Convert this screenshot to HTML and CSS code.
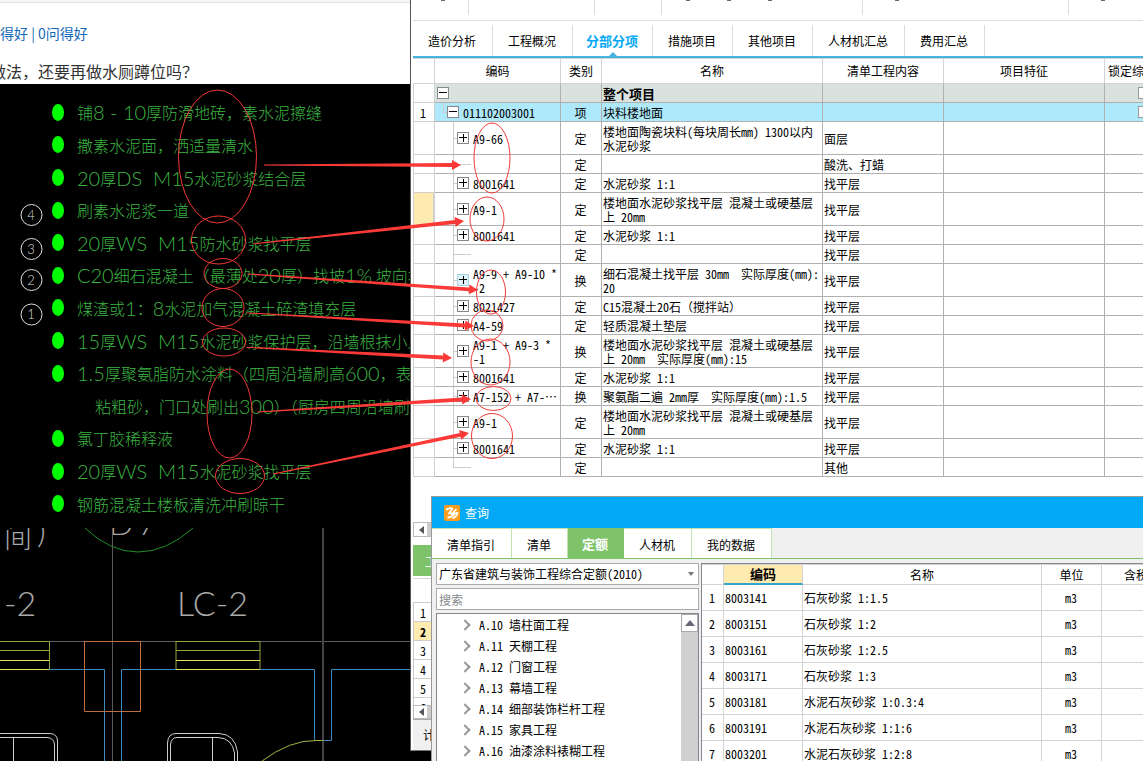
FILE: index.html
```html
<!DOCTYPE html>
<html lang="zh-CN">
<head>
<meta charset="utf-8">
<title>分部分项</title>
<link rel="stylesheet" href="styles.css">
</head>
<body>
<div class="desk">
  <section class="post">
    <header class="post-head">
      <p class="votes"><a href="#">答得好</a> | <a href="#">0问得好</a></p>
      <h1 class="question">做法，还要再做水厕蹲位吗？</h1>
    </header>
    <div class="cad">
      <ul class="notes">
        <li>铺<b>8 - 10</b>厚防滑地砖，素水泥擦缝</li>
        <li>撒素水泥面，洒适量清水</li>
        <li><b>20</b>厚<b>DS  M15</b>水泥砂浆结合层</li>
        <li>刷素水泥浆一道</li>
        <li><b>20</b>厚<b>WS  M15</b>防水砂浆找平层</li>
        <li><b>C20</b>细石混凝土（最薄处<b>20</b>厚）找坡<b>1%</b> 坡向地漏</li>
        <li>煤渣或<b>1</b>：<b>8</b>水泥加气混凝土碎渣填充层</li>
        <li><b>15</b>厚<b>WS  M15</b>水泥砂浆保护层，沿墙根抹小八字</li>
        <li><b>1.5</b>厚聚氨脂防水涂料（四周沿墙刷高<b>600</b>，表面</li>
        <li class="cont">粘粗砂，门口处刷出<b>300</b>）（厨房四周沿墙刷</li>
        <li>氯丁胶稀释液</li>
        <li><b>20</b>厚<b>WS  M15</b>水泥砂浆找平层</li>
        <li>钢筋混凝土楼板清洗冲刷晾干</li>
      </ul>
      <svg class="plan" width="411" height="233" viewBox="0 528 411 233" fill="none">
        <g class="cad-text">
          <text x="4" y="548" font-size="28">间</text>
          <text x="37" y="543" font-size="34">)</text>
          <text x="109" y="535" font-size="32">D</text>
          <text x="138" y="535" font-size="32">7</text>
          <text x="-39" y="616" font-size="34">LC</text>
          <text x="4" y="616" font-size="34">-2</text>
          <text x="177" y="616" font-size="34">LC-2</text>
        </g>
        <path d="M85 528Q110 552 138 552T193 528" stroke="#1f8f2c"/>
        <path d="M112.500 528V761M0 641.500H411" stroke="#5c5c5c"/>
        <path d="M323 528V761" stroke="#444" stroke-width="2"/>
        <path d="M0 641.500H49.500V669M0 650.500H49M176 641.500H260V669M176 669V641M176 650.500H260" stroke="#9aa23c"/>
        <path d="M0 660.500H49M0 669.500H49M176 660.500H260M176 669.500H260" stroke="#e4e456"/>
        <path d="M49 669.500H104.500V761M121.500 761V669.500H176M260 669.500H314.500V740.500H331.500V669.500H411" stroke="#3a8cc0"/>
        <path d="M84.500 641.500H140.500V711.500H84.500Z" stroke="#c0703c"/>
        <path d="M262 761Q290 740 316 740.500H323" stroke="#a8b040"/>
        <path d="M0 733.500H50Q57.500 734 57.500 741V761M0 737.500H47Q54.500 738 54.500 745V761M13.500 737V761M167.500 761V743Q168 733.500 176 733.500H219Q235 734 237.500 752V761M170.500 761V745Q171 737.500 177 737.500H218Q232 738 234.500 753V761M212.500 737V761" stroke="#ccc"/>
      </svg>
      <svg class="marks" width="60" height="130" viewBox="0 200 60 130">
        <g fill="none" stroke="#ddd">
          <circle cx="31.500" cy="215" r="10.500"/><circle cx="31.500" cy="249" r="10.500"/><circle cx="31.500" cy="280" r="10.500"/><circle cx="31.500" cy="314.500" r="10.500"/>
        </g>
        <g class="mark-text"><text x="31" y="220">4</text><text x="31" y="254">3</text><text x="31" y="285">2</text><text x="31" y="319">1</text></g>
      </svg>
    </div>
  </section>

  <main class="app">
    <div class="toolbar">
      <div class="group g1"><i class="tip"></i></div>
      <div class="group g2"></div>
      <div class="group g3"></div>
      <div class="group g4"><i class="tip"></i><i class="tip"></i><i class="tip"></i></div>
      <div class="group g5"><i class="tip"></i></div>
      <div class="group g6"><i class="tip"></i></div>
    </div>
    <nav class="tabs">
      <button>造价分析</button><button>工程概况</button><button class="on">分部分项</button><button>措施项目</button><button>其他项目</button><button>人材机汇总</button><button>费用汇总</button>
    </nav>
    <table class="bill">
      <colgroup><col class="w-no"><col class="w-code"><col class="w-type"><col class="w-name"><col class="w-work"><col class="w-feat"><col class="w-lock"></colgroup>
      <thead><tr><th></th><th>编码</th><th>类别</th><th>名称</th><th>清单工程内容</th><th>项目特征</th><th>锁定综合单价</th></tr></thead>
      <tbody>
        <tr class="root"><td></td><td><div class="code"><button class="box minus" aria-label="折叠"></button></div></td><td></td><td>整个项目</td><td></td><td></td><td><input type="checkbox" aria-label="锁定整个项目"></td></tr>
        <tr class="item"><td>1</td><td><div class="code lv1"><button class="box minus" aria-label="折叠"></button><span>011102003001</span></div></td><td>项</td><td>块料楼地面</td><td></td><td></td><td><input type="checkbox" aria-label="锁定块料楼地面"></td></tr>
        <tr class="tall"><td></td><td><div class="code lv2"><button class="box" aria-label="展开"></button><span>A9-66</span></div></td><td>定</td><td>楼地面陶瓷块料(每块周长mm) 1300以内<br>水泥砂浆</td><td>面层</td><td></td><td></td></tr>
        <tr><td></td><td><div class="code lv2 bare"></div></td><td>定</td><td></td><td>酸洗、打蜡</td><td></td><td></td></tr>
        <tr><td></td><td><div class="code lv2"><button class="box" aria-label="展开"></button><span>8001641</span></div></td><td>定</td><td>水泥砂浆 1:1</td><td>找平层</td><td></td><td></td></tr>
        <tr class="tall"><td class="cur"></td><td><div class="code lv2"><button class="box" aria-label="展开"></button><span>A9-1</span></div></td><td>定</td><td>楼地面水泥砂浆找平层 混凝土或硬基层<br>上 20mm</td><td>找平层</td><td></td><td></td></tr>
        <tr><td></td><td><div class="code lv2"><button class="box" aria-label="展开"></button><span>8001641</span></div></td><td>定</td><td>水泥砂浆 1:1</td><td>找平层</td><td></td><td></td></tr>
        <tr><td></td><td><div class="code lv2 bare"></div></td><td>定</td><td></td><td>找平层</td><td></td><td></td></tr>
        <tr class="tall"><td></td><td><div class="code lv2"><button class="box hot" aria-label="展开"></button><span>A9-9 + A9-10 *<br>-2</span></div></td><td>换</td><td>细石混凝土找平层 30mm&nbsp; 实际厚度(mm):<br>20</td><td>找平层</td><td></td><td></td></tr>
        <tr><td></td><td><div class="code lv2"><button class="box" aria-label="展开"></button><span>8021427</span></div></td><td>定</td><td>C15混凝土20石（搅拌站）</td><td>找平层</td><td></td><td></td></tr>
        <tr><td></td><td><div class="code lv2"><button class="box" aria-label="展开"></button><span>A4-59</span></div></td><td>定</td><td>轻质混凝土垫层</td><td>找平层</td><td></td><td></td></tr>
        <tr class="tall"><td></td><td><div class="code lv2"><button class="box" aria-label="展开"></button><span>A9-1 + A9-3 *<br>-1</span></div></td><td>换</td><td>楼地面水泥砂浆找平层 混凝土或硬基层<br>上 20mm&nbsp; 实际厚度(mm):15</td><td>找平层</td><td></td><td></td></tr>
        <tr><td></td><td><div class="code lv2"><button class="box" aria-label="展开"></button><span>8001641</span></div></td><td>定</td><td>水泥砂浆 1:1</td><td>找平层</td><td></td><td></td></tr>
        <tr><td></td><td><div class="code lv2"><button class="box" aria-label="展开"></button><span>A7-152 + A7-⋯</span></div></td><td>换</td><td>聚氨酯二遍 2mm厚&nbsp; 实际厚度(mm):1.5</td><td>找平层</td><td></td><td></td></tr>
        <tr class="tall"><td></td><td><div class="code lv2"><button class="box" aria-label="展开"></button><span>A9-1</span></div></td><td>定</td><td>楼地面水泥砂浆找平层 混凝土或硬基层<br>上 20mm</td><td>找平层</td><td></td><td></td></tr>
        <tr><td></td><td><div class="code lv2"><button class="box" aria-label="展开"></button><span>8001641</span></div></td><td>定</td><td>水泥砂浆 1:1</td><td>找平层</td><td></td><td></td></tr>
        <tr><td></td><td><div class="code lv2 bare end"></div></td><td>定</td><td></td><td>其他</td><td></td><td></td></tr>
      </tbody>
    </table>
    <aside class="under">
      <button class="scroll" aria-label="向左"><svg width="6" height="8"><path d="M6 0V8L1 4Z" fill="#555"/></svg></button>
      <div class="subtab">工料机</div>
      <ol class="nums"><li>1</li><li class="cur">2</li><li>3</li><li>4</li><li>5</li><li class="cut">6</li></ol>
      <button class="scroll low" aria-label="向左"><svg width="6" height="8"><path d="M6 0V8L1 4Z" fill="#555"/></svg></button>
      <footer class="status">计价</footer>
    </aside>
  </main>
</div>

<section class="dialog">
  <header class="title">
    <svg width="16" height="16" viewBox="0 0 16 16"><rect width="16" height="16" rx="2" fill="#fa9d1c"/><path d="M2 5Q5 2.500 8.500 3.500L5 8.500Q8 7.500 7.500 9.500L12.500 4M3.500 12.500Q8 12.500 10.500 8.500L13.500 8Q12.500 12 8.500 13.500" fill="none" stroke="#fff" stroke-width="1.800" stroke-linejoin="round"/></svg>
    <span>查询</span>
  </header>
  <nav class="dtabs"><button>清单指引</button><button>清单</button><button class="on">定额</button><button>人材机</button><button>我的数据</button></nav>
  <div class="dbody">
    <div class="side">
      <div class="combo">
        <select aria-label="定额库"><option>广东省建筑与装饰工程综合定额(2010)</option></select>
        <svg width="6" height="4"><path d="M0 0H6L3 4Z" fill="#777"/></svg>
      </div>
      <input class="search" type="text" placeholder="搜索" aria-label="搜索">
      <div class="tree">
        <ul>
          <li>A.10 墙柱面工程</li><li>A.11 天棚工程</li><li>A.12 门窗工程</li><li>A.13 幕墙工程</li><li>A.14 细部装饰栏杆工程</li><li>A.15 家具工程</li><li>A.16 油漆涂料裱糊工程</li>
        </ul>
        <div class="vbar"><button aria-label="向上"><svg width="10" height="6"><path d="M0 6L5 0L10 6Z" fill="#667"/></svg></button></div>
      </div>
    </div>
    <div class="result">
      <table class="list">
        <colgroup><col class="w-no"><col class="w-id"><col class="w-title"><col class="w-unit"><col class="w-price"></colgroup>
        <thead><tr><th></th><th class="cur">编码</th><th>名称</th><th>单位</th><th>含税价</th></tr></thead>
        <tbody>
          <tr><td>1</td><td>8003141</td><td>石灰砂浆 1:1.5</td><td>m3</td><td></td></tr>
          <tr><td>2</td><td>8003151</td><td>石灰砂浆 1:2</td><td>m3</td><td></td></tr>
          <tr><td>3</td><td>8003161</td><td>石灰砂浆 1:2.5</td><td>m3</td><td></td></tr>
          <tr><td>4</td><td>8003171</td><td>石灰砂浆 1:3</td><td>m3</td><td></td></tr>
          <tr><td>5</td><td>8003181</td><td>水泥石灰砂浆 1:0.3:4</td><td>m3</td><td></td></tr>
          <tr><td>6</td><td>8003191</td><td>水泥石灰砂浆 1:1:6</td><td>m3</td><td></td></tr>
          <tr><td>7</td><td>8003201</td><td>水泥石灰砂浆 1:2:8</td><td>m3</td><td></td></tr>
        </tbody>
      </table>
    </div>
  </div>
</section>

<svg class="links" width="1143" height="761" viewBox="0 0 1143 761">
  <g fill="none" stroke="#f03a38">
    <ellipse cx="217.500" cy="156.500" rx="39" ry="66.500"/>
    <ellipse cx="218.500" cy="240" rx="27" ry="24"/>
    <ellipse cx="223" cy="273.500" rx="19" ry="15"/>
    <ellipse cx="223" cy="307.500" rx="21" ry="19"/>
    <ellipse cx="224" cy="342" rx="21.500" ry="14"/>
    <ellipse cx="229.500" cy="413.500" rx="22.500" ry="44.500"/>
    <ellipse cx="240" cy="476" rx="24.500" ry="17.500"/>
    <ellipse cx="492" cy="158" rx="18" ry="35"/>
    <ellipse cx="487" cy="219" rx="17" ry="22"/>
    <ellipse cx="491" cy="292" rx="14.500" ry="22"/>
    <ellipse cx="487" cy="325.500" rx="16" ry="15.500"/>
    <ellipse cx="490.500" cy="362" rx="19.500" ry="23"/>
    <ellipse cx="493.500" cy="398.500" rx="17.500" ry="12"/>
    <ellipse cx="492" cy="436" rx="20.500" ry="22.500"/>
  </g>
  <g fill="#fb3a38">
    <path transform="translate(461 165)" d="M-197-.5L-9-2V-5L0 0L-9 5V2L-197 .5Z"/>
    <path transform="translate(464 221) rotate(-6.200)" d="M-212-.5L-9-2V-5L0 0L-9 5V2L-212 .5Z"/>
    <path transform="translate(478 290) rotate(4)" d="M-231-.5L-9-2V-5L0 0L-9 5V2L-231 .5Z"/>
    <path transform="translate(474 326) rotate(3.300)" d="M-228-.5L-9-2V-5L0 0L-9 5V2L-228 .5Z"/>
    <path transform="translate(452 358) rotate(3)" d="M-206-.5L-9-2V-5L0 0L-9 5V2L-206 .5Z"/>
    <path transform="translate(471 399) rotate(-3.500)" d="M-214-.5L-9-2V-5L0 0L-9 5V2L-214 .5Z"/>
    <path transform="translate(469 433) rotate(-11.800)" d="M-200-.5L-9-2V-5L0 0L-9 5V2L-200 .5Z"/>
  </g>
</svg>
</body>
</html>
```

FILE: styles.css
```css
* { box-sizing: border-box; }
body {
  margin: 0;
  position: relative;
  height: 100vh;
  overflow: hidden;
  background: #000;
  color: #000;
  font: 12px/14px "Noto Sans Mono CJK SC", "Noto Sans CJK SC", sans-serif;
}
button, input, select { font: inherit; color: inherit; padding: 0; margin: 0; border: 0; background: none; border-radius: 0; }
ul, ol { list-style: none; margin: 0; padding: 0; }
svg { display: block; flex: none; }
.desk { display: flex; height: 100%; }

/* forum post with the drawing */
.post { flex: 0 0 410px; overflow: hidden; display: flex; flex-direction: column; font-family: "Noto Sans CJK SC", sans-serif; }
.post-head { flex: none; height: 84px; background: #fff; border-top: 2px solid #f5f5f5; box-shadow: inset 0 1px #e4e4e4; padding-top: 21px; }
.votes { margin: 0 0 0 -14px; font-size: 14px; line-height: 20px; color: #1468b8; white-space: nowrap; }
.votes a { color: inherit; text-decoration: none; }
.question { margin: 16px 0 0 -10px; font-size: 16px; line-height: 24px; font-weight: 400; color: #333; white-space: nowrap; }
.cad { position: relative; background: #000; flex: 1; }
.notes {
  display: grid;
  grid-auto-rows: 1fr;
  height: 444px;
  padding: 12px 0 8px 77px;
  color: #3cb443;
  font-size: 16px;
  line-height: 32px;
  font-weight: 300;
  white-space: nowrap;
}
.notes li { position: relative; display: flex; align-items: center; white-space: pre; }
.notes li::before { content: ""; position: absolute; left: -25px; width: 12px; height: 17px; border-radius: 50%; background: #0f0; }
.notes .cont { padding-left: 18px; }
.notes .cont::before { display: none; }
.notes b { font: 300 20px/32px Lato, sans-serif; }
.cad-text { fill: #aaa; font-family: Lato, "Noto Sans CJK SC", sans-serif; font-weight: 300; }
.marks { position: absolute; left: 0; top: 116px; }
.mark-text { fill: #ddd; font: 300 13px Lato, sans-serif; text-anchor: middle; }

/* pricing application */
.app { flex: 1; min-width: 0; height: 751px; overflow: hidden; background: #fff; border-left: 1px solid #555; border-bottom: 1px solid #777; padding-left: 2px; }
.toolbar { display: flex; height: 21px; padding-bottom: 5px; border-bottom: 1px solid #ddd; }
.group { display: flex; border-right: 1px solid #ddd; }
.g1 { width: 56px; padding-left: 28px; }
.g2 { width: 126px; }
.g3 { width: 67px; }
.g4 { width: 201px; padding-left: 24px; gap: 37px; }
.g5 { width: 206px; padding-left: 32px; }
.g6 { flex: 1; border: 0; padding-left: 32px; }
.tip { width: 4px; height: 1px; background: #667; }
.tabs { display: flex; height: 37px; padding-top: 4px; border-bottom: 2px solid #45b5e0; }
.tabs button { position: relative; padding: 0 16px 0 15px; border-right: 1px solid #ddd; flex: none; }
.tabs .on { color: #03a9f4; font-weight: 700; font-size: 13px; padding: 0 14px 0 13px; }
.tabs .on::after { content: ""; position: absolute; left: 36px; bottom: 0; border: 4px solid transparent; border-top: 0; border-bottom-color: #45b5e0; }

table { border-collapse: separate; border-spacing: 0; table-layout: fixed; }
th, td { padding: 0; font-weight: 400; white-space: nowrap; overflow: hidden; }
.w-no { width: 22px; }
.bill { width: 771px; min-width: 100%; }
.w-code { width: 126px; }
.w-type { width: 41px; }
.w-name { width: 221px; }
.w-work { width: 121px; }
.w-feat { width: 161px; }
.w-lock { width: 79px; }
.bill th { height: 26px; border: solid #d3d3d3; border-width: 1px 1px 1px 0; }
.bill td { height: 19px; border: solid #b0b0b0; border-width: 0 1px 1px 0; }
.bill .tall td { height: 33px; }
.bill td:nth-child(1) { border-color: #d0d0d0; border-left: 1px solid #d0d0d0; text-align: center; padding: 2px 2px 0 0; }
.bill td:nth-child(3) { text-align: center; padding: 2px 1px 0 0; }
.bill td:nth-child(7) { text-align: center; }
.bill td:nth-child(4), .bill td:nth-child(5) { padding: 2px 0 0 1px; }
.root td:not(:first-child) { background: #d9e2de; }
.root td:nth-child(4) { font-weight: 700; font-size: 13px; }
.item td:not(:first-child) { background: #ade8fb; }
.bill .cur { background: #ffebb0; border-right: 2px solid #35a5d0; }
.bill input { appearance: none; display: block; width: 12px; height: 12px; margin: 0 auto; border: 1px solid #999; background: #fff; }
.code { position: relative; display: flex; align-items: center; gap: 4px; height: 18px; padding-left: 2px; }
.code span { padding-top: 2px; }
.tall .code { height: 32px; }
.lv1 { padding-left: 12px; }
.lv2 { padding-left: 22px; }
.box { position: relative; flex: none; width: 12px; height: 12px; border: 1px solid #888; background: #fff; }
.box::before { content: ""; position: absolute; left: 1px; top: 4px; width: 8px; height: 1px; background: #000; }
.box::after { content: ""; position: absolute; left: 5px; top: 1px; width: 1px; height: 8px; background: #000; }
.minus::after { display: none; }
.hot { background: #e0f2fa; border-color: #a5d3e2; }
.lv1::before { content: ""; position: absolute; left: 8px; top: 0; width: 4px; height: 9px; border: solid #ccc; border-width: 0 0 1px 1px; }
.lv2::before { content: ""; position: absolute; left: 18px; top: 0; bottom: 0; border-left: 1px solid #ccc; }
.lv2::after { content: ""; position: absolute; left: 18px; top: 50%; width: 4px; border-top: 1px solid #ccc; }
.bare::after { width: 18px; }
.end::before { bottom: 50%; }

/* lower panel, mostly behind the dialog */
.under { width: 100px; margin-top: 45px; }
.scroll { display: flex; align-items: center; justify-content: flex-start; width: 32px; height: 15px; padding-left: 4px; border: 1px solid #bbb; background: linear-gradient(90deg, #fff 13px, #ccc 13px); }
.subtab { height: 31px; margin-top: 8px; padding-left: 12px; background: #7ec36a; color: #fff; font-size: 13px; line-height: 31px; box-shadow: 0 2px #fff, 0 3px #d5d5d5; }
.nums { margin-top: 26px; height: 103px; overflow: hidden; border-top: 1px solid #ccc; }
.nums li { height: 19px; line-height: 20px; padding-left: 6px; border: solid #ccc; border-width: 0 0 1px 1px; }
.nums .cur { background: #ffebb0; font-weight: 700; }
.low { height: 14px; }
.status { height: 31px; padding-left: 10px; border-top: 1px solid #aaa; background: #f0f0f0; line-height: 30px; }

/* query dialog */
.dialog { position: absolute; left: 431px; right: 0; top: 496px; bottom: 0; display: flex; flex-direction: column; overflow: hidden; background: #f0f0f0; border: solid #999; border-width: 1px 0 0 1px; }
.title { flex: none; display: flex; align-items: center; gap: 5px; height: 31px; padding-left: 12px; background: #03a9f4; color: #fff; }
.dtabs { flex: none; display: flex; height: 31px; border-bottom: 1px solid #7ec36a; }
.dtabs button { padding: 2px 16px 0 15px; background: #fff; border: solid #bde5ad; border-width: 1px 1px 0 0; }
.dtabs .on { padding: 0 15px 0 14px; background: #7ec36a; border-color: #7ec36a; color: #fff; font-weight: 700; font-size: 13px; }
.dbody { flex: 1; min-height: 0; display: flex; gap: 2px; padding: 4px 0 0 4px; }
.side { flex: 0 0 263px; display: flex; flex-direction: column; gap: 3px; }
.combo { position: relative; }
.combo select { appearance: none; display: block; width: 100%; height: 22px; padding: 0 2px; border: 1px solid #aaa; background: #fff; }
.combo svg { position: absolute; right: 5px; top: 9px; }
.search { flex: none; height: 22px; padding: 0 2px; border: 1px solid #aaa; background: #fff; }
.search::placeholder { color: #888; }
.tree { flex: 1; min-height: 0; overflow: hidden; display: flex; justify-content: space-between; background: #fff; border: solid #828790; border-width: 1px 1px 0 1px; }
.tree li { position: relative; height: 21px; padding-left: 42px; line-height: 22px; }
.tree li::before { content: ""; position: absolute; left: 24px; top: 7px; width: 6px; height: 6px; border: solid #999; border-width: 2px 2px 0 0; transform: rotate(45deg); }
.vbar { width: 17px; background: #d0d0d0; }
.vbar button { display: flex; align-items: center; justify-content: center; width: 17px; height: 18px; border: 1px solid #aaa; background: #fff; }
.result { flex: 1; min-width: 0; overflow: hidden; background: #fff; border: solid #828790; border-width: 1px 0 0 1px; }
.list { width: 481px; min-width: 100%; }
.w-id { width: 79px; }
.w-title { width: 239px; }
.w-unit { width: 60px; }
.list th, .list td { border: solid #d3d3d3; border-width: 0 1px 1px 0; height: 26px; }
.list th { height: 21px; border-top-width: 1px; }
.list th.cur { background: #ffebb0; font-weight: 700; font-size: 13px; border-bottom: 2px solid #35a5d0; }
.list td:nth-child(1), .list td:nth-child(4) { text-align: center; padding-right: 1px; }
.list td:nth-child(2), .list td:nth-child(3) { padding-left: 1px; }

/* markup drawn over both windows */
.links { position: absolute; left: 0; top: 0; pointer-events: none; }
```
